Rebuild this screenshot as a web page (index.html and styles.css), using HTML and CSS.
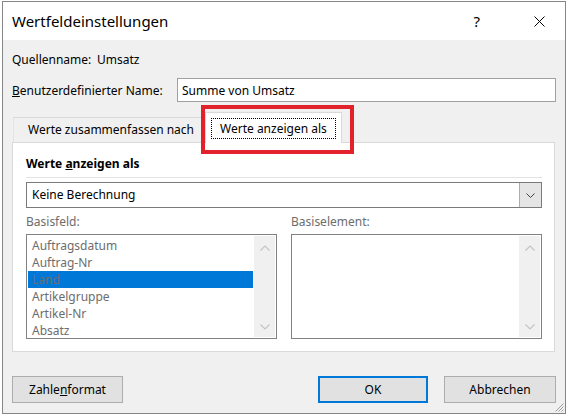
FILE: index.html
```html
<!DOCTYPE html>
<html lang="de">

<head>
    <meta charset="UTF-8">
    <meta name="viewport" content="width=device-width, initial-scale=1.0">
    <title>Wertfeldeinstellungen</title>
    <link rel="stylesheet" href="styles.css">
</head>

<body>

    <div class="window">
        <div class="titlebar">
            <span class="title">Wertfeldeinstellungen</span>
            <span class="help">?</span>
            <span class="close">
                <svg width="11" height="11" viewBox="0 0 11 11">
                    <path d="M0.5 0.5 L10.5 10.5 M10.5 0.5 L0.5 10.5" stroke="#000" stroke-width="1" fill="none" />
                </svg>
            </span>
        </div>

        <div class="content">
            <div class="info-row">
                <div>Quellenname:</div>
                <div>Umsatz</div>
            </div>

            <div class="name-row">
                <label for="customName"><u>B</u>enutzerdefinierter Name:</label>
                <input type="text" id="customName" value="Summe von Umsatz">
            </div>

            <div class="tabs">
                <div class="tab">Werte zusammenfassen nach</div>
                <div class="tab active"><span class="focus">Werte anzeigen als</span></div>
                <div class="highlight"></div>
            </div>

            <div class="panel">
                <div class="panel-heading">Werte <u>a</u>nzeigen als</div>

                <div class="dropdown">
                    <span class="dropdown-value">Keine Berechnung</span>
                    <span class="dropdown-button">
                        <svg width="9" height="5" viewBox="0 0 9 5">
                            <path d="M0.5 0.5 L4.5 4.5 L8.5 0.5" stroke="#444" stroke-width="1" fill="none" />
                        </svg>
                    </span>
                </div>

                <div class="lists">
                    <div class="list-group">
                        <div class="list-label">Basisfeld:</div>
                        <div class="listbox">
                            <ul class="items">
                                <li>Auftragsdatum</li>
                                <li>Auftrag-Nr</li>
                                <li class="selected">Land</li>
                                <li>Artikelgruppe</li>
                                <li>Artikel-Nr</li>
                                <li>Absatz</li>
                            </ul>
                            <div class="scrollbar">
                                <svg width="10" height="6" viewBox="0 0 10 6">
                                    <path d="M0.5 5.5 L5 1 L9.5 5.5" stroke="#c4c4c4" stroke-width="1.2" fill="none" />
                                </svg>
                                <svg width="10" height="6" viewBox="0 0 10 6">
                                    <path d="M0.5 0.5 L5 5 L9.5 0.5" stroke="#c4c4c4" stroke-width="1.2" fill="none" />
                                </svg>
                            </div>
                        </div>
                    </div>

                    <div class="list-group">
                        <div class="list-label">Basiselement:</div>
                        <div class="listbox">
                            <ul class="items"></ul>
                            <div class="scrollbar">
                                <svg width="10" height="6" viewBox="0 0 10 6">
                                    <path d="M0.5 5.5 L5 1 L9.5 5.5" stroke="#c4c4c4" stroke-width="1.2" fill="none" />
                                </svg>
                                <svg width="10" height="6" viewBox="0 0 10 6">
                                    <path d="M0.5 0.5 L5 5 L9.5 0.5" stroke="#c4c4c4" stroke-width="1.2" fill="none" />
                                </svg>
                            </div>
                        </div>
                    </div>
                </div>
            </div>

            <div class="buttons">
                <button class="btn format">Zahle<u>n</u>format</button>
                <button class="btn ok">OK</button>
                <button class="btn cancel">Abbrechen</button>
            </div>
        </div>

        <svg class="grip" width="10" height="10" viewBox="0 0 10 10">
            <path d="M9.5 1.5 L1.5 9.5 M9.5 4.5 L4.5 9.5 M9.5 7.5 L7.5 9.5" stroke="#a0a0a0" stroke-width="1" fill="none" />
        </svg>
    </div>

</body>

</html>
```

FILE: styles.css
```css
body {
    margin: 0;
    background-color: #ffffff;
    font-family: 'Noto Sans', 'Open Sans', sans-serif;
    font-size: 12px;
    color: #000;
}

.window {
    position: relative;
    box-sizing: border-box;
    width: 564px;
    height: 413px;
    margin: 1px 0 0 2px;
    border: 1px solid #858585;
    background-color: #f0f0f0;
}

.titlebar {
    display: flex;
    align-items: center;
    height: 38px;
    padding-left: 9px;
    background-color: #ffffff;
}

.title {
    flex: 1;
    font-size: 15px;
}

.help {
    font-size: 15px;
    margin-right: 54px;
}

.close {
    display: flex;
    margin-right: 20px;
}

.content {
    padding: 0 9px;
}

.info-row {
    display: grid;
    grid-template-columns: 85px 1fr;
    height: 16px;
    line-height: 16px;
    margin-top: 12px;
}

.name-row {
    display: flex;
    align-items: center;
    margin-top: 10px;
    height: 24px;
}

.name-row label {
    flex: 0 0 165px;
}

.name-row input {
    box-sizing: border-box;
    width: 379px;
    height: 24px;
    margin: 0;
    padding: 0 4px;
    border: 1px solid #a0a0a0;
    font-family: inherit;
    font-size: 12px;
    background-color: #fff;
}

.tabs {
    position: relative;
    display: flex;
    align-items: flex-end;
    height: 30px;
    margin-top: 10px;
    padding-left: 1px;
}

.tab {
    box-sizing: border-box;
    height: 25px;
    line-height: 24px;
    padding: 0 11px 0 14px;
    border-top: 1px solid #d9d9d9;
    border-left: 1px solid #e4e4e4;
}

.tab.active {
    height: 31px;
    margin-bottom: -1px;
    padding: 5px 5px 0;
    border: 1px solid #d9d9d9;
    border-bottom: none;
    background-color: #ffffff;
}

.focus {
    display: block;
    height: 21px;
    line-height: 19px;
    padding: 0 8px;
    box-sizing: border-box;
    border: 1px dotted #000;
}

.highlight {
    position: absolute;
    left: 189px;
    top: -7px;
    width: 153px;
    height: 49px;
    box-sizing: border-box;
    border: 4px solid #e2222b;
}

.panel {
    box-sizing: border-box;
    width: 543px;
    height: 210px;
    padding: 13px 12px 0 13px;
    border: 1px solid #d9d9d9;
    background-color: #ffffff;
}

.panel-heading {
    font-weight: bold;
    height: 21px;
    line-height: 16px;
    border-bottom: 1px solid #e3e3e3;
}

.dropdown {
    display: flex;
    box-sizing: border-box;
    height: 26px;
    margin-top: 4px;
    border: 1px solid #7a7a7a;
}

.dropdown-value {
    flex: 1;
    line-height: 24px;
    padding-left: 5px;
}

.dropdown-button {
    display: flex;
    align-items: center;
    justify-content: center;
    width: 21px;
    background-color: #e5e5e5;
    border-left: 1px solid #adadad;
}

.lists {
    display: flex;
    justify-content: space-between;
    margin-top: 6px;
}

.list-group {
    width: 251px;
}

.list-label {
    color: #6d6d6d;
    height: 20px;
    line-height: 16px;
}

.listbox {
    display: flex;
    box-sizing: border-box;
    height: 105px;
    border: 1px solid #828282;
}

.items {
    flex: 1;
    list-style: none;
    margin: 0;
    padding: 2px 1px 0;
    overflow: hidden;
}

.items li {
    height: 17px;
    line-height: 17px;
    padding-left: 4px;
    color: #6d6d6d;
}

.items li.selected {
    background-color: #0078d7;
}

.scrollbar {
    display: flex;
    flex-direction: column;
    justify-content: space-between;
    align-items: center;
    width: 21px;
    margin: 1px 1px 1px 0;
    padding: 9px 0 7px;
    box-sizing: border-box;
    background-color: #f0f0f0;
}

.buttons {
    display: flex;
    gap: 16px;
    margin-top: 24px;
}

.btn {
    box-sizing: border-box;
    height: 27px;
    margin: 0;
    padding: 0;
    font-family: inherit;
    font-size: 12px;
    color: #000;
    background-color: #e1e1e1;
    border: 1px solid #adadad;
}

.btn.format {
    width: 111px;
}

.btn.ok {
    width: 110px;
    margin-left: auto;
    border: 2px solid #0078d7;
}

.btn.cancel {
    width: 112px;
}

.grip {
    position: absolute;
    right: 1px;
    bottom: 1px;
}
```
